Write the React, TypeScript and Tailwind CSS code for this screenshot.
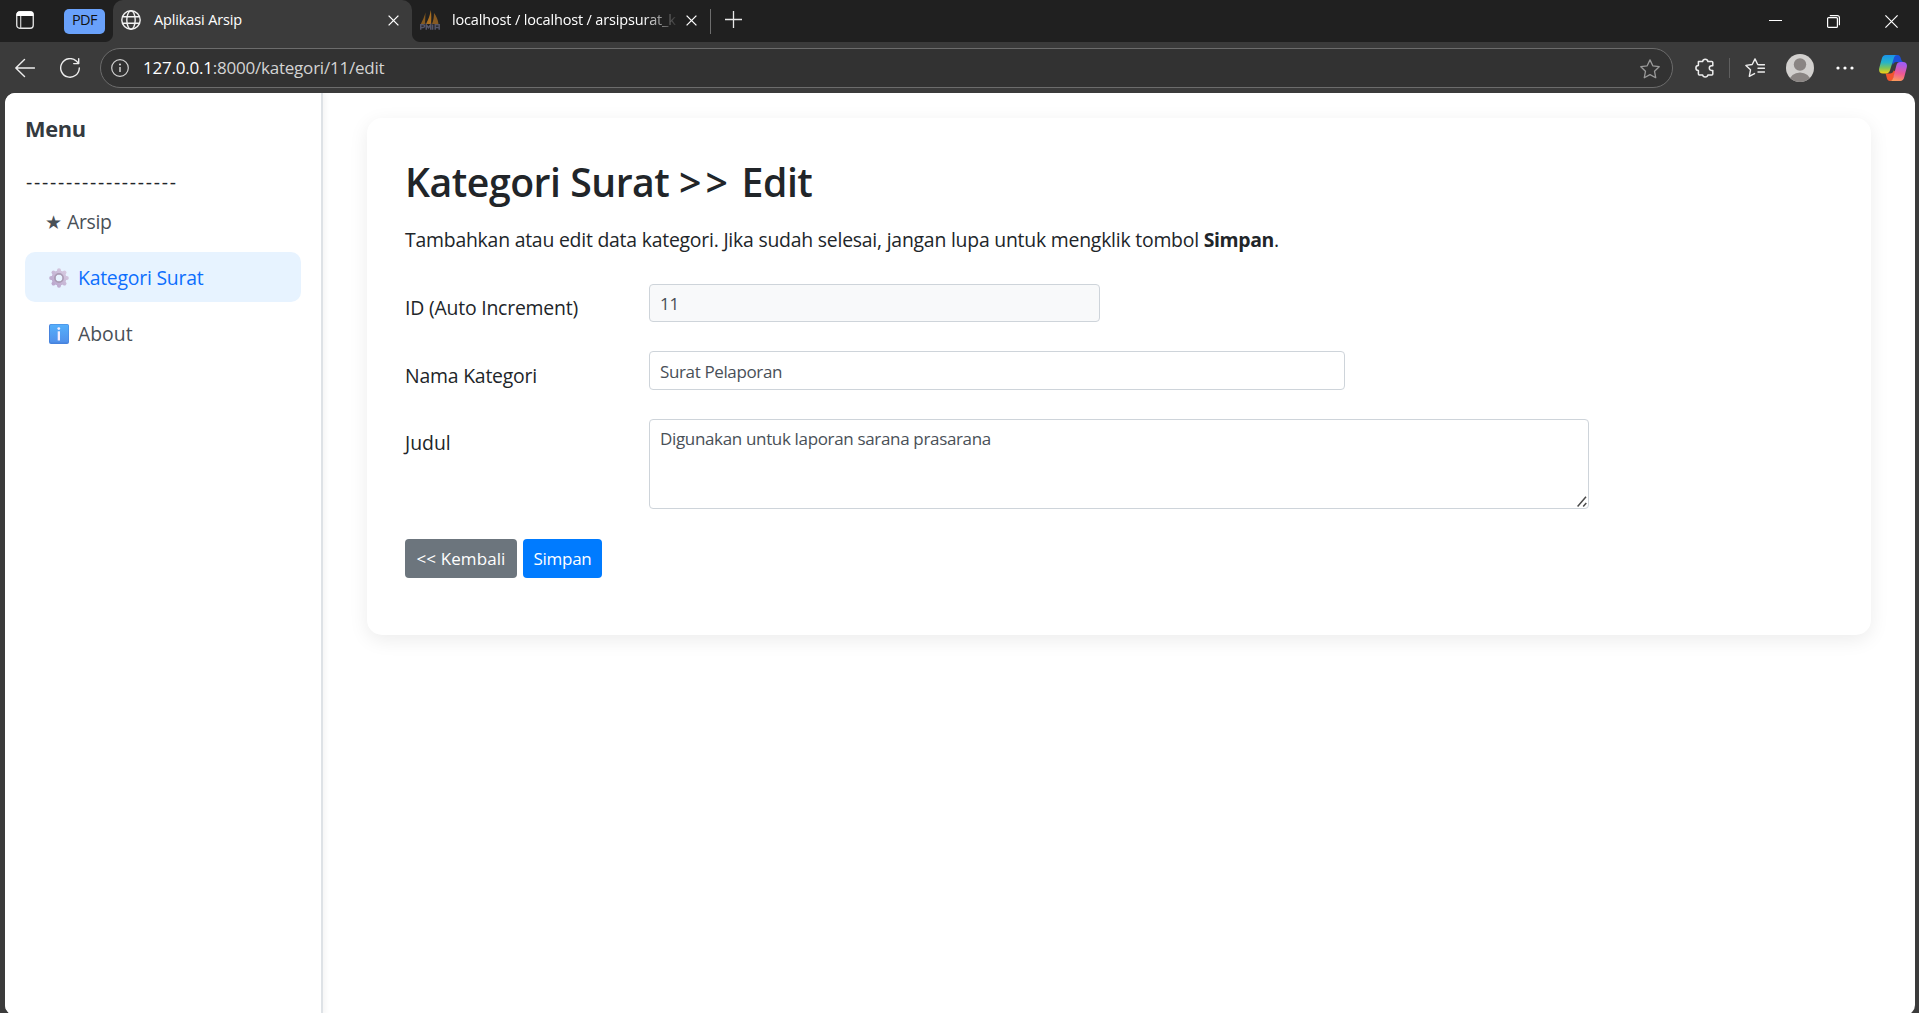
import type { ReactNode } from "react";

function TabStrip() {
  return (
    <div className="flex h-[42px] shrink-0 items-start bg-[#202020] text-[14.5px] leading-5 text-white">
      <svg className="mt-[11px] ml-4 h-[18px] w-[18px] shrink-0" viewBox="0 0 18 18" fill="none">
        <rect x=".75" y=".75" width="16.5" height="16.5" rx="3" stroke="#e8e8e8" strokeWidth="1.3" />
        <path d="M.5 5V3.5a3 3 0 0 1 3-3h11a3 3 0 0 1 3 3V5z" fill="#fff" />
        <path d="M4.7 5v12.5" stroke="#cfcfcf" strokeWidth="1.2" />
      </svg>
      <div className="mt-[9px] ml-[30px] flex h-[25px] w-[41px] shrink-0 justify-center rounded-[5px] bg-[#69a1fa] pt-px tracking-[-0.5px] text-[#111]">
        PDF
      </div>
      <div className="relative ml-2 flex h-[42px] w-[299px] shrink-0 items-start rounded-t-[10px] bg-[#3b3b3b]">
        <div className="absolute bottom-0 -left-2 h-2 w-2 bg-[radial-gradient(circle_at_0_0,#202020_7.5px,#3b3b3b_8.5px)]" />
        <div className="absolute -right-2 bottom-0 h-2 w-2 bg-[radial-gradient(circle_at_100%_0,#202020_7.5px,#3b3b3b_8.5px)]" />
        <svg className="mt-[10px] ml-2 h-5 w-5 shrink-0" viewBox="0 0 20 20" fill="none" stroke="#f2f2f2" strokeWidth="1.4">
          <circle cx="10" cy="10" r="9.2" />
          <ellipse cx="10" cy="10" rx="4.2" ry="9.2" />
          <path d="M1.5 6.7h17M1.5 13.3h17" />
        </svg>
        <span className="mt-[10px] ml-[13px] w-[234px] tracking-[-0.13px]">Aplikasi Arsip</span>
        <svg className="mt-[15px] h-[11px] w-[11px] shrink-0" viewBox="0 0 11 11" stroke="#fff" strokeWidth="1.3">
          <path d="M.6.6l9.8 9.8M10.4.6L.6 10.4" />
        </svg>
      </div>
      <svg className="mt-[10px] ml-2 h-5 w-5 shrink-0" viewBox="0 0 20 20">
        <path d="M5.500 2.500 5 14H.8C2.600 10.500 4.200 7 5.500 2.500z" fill="#84591f" />
        <path d="M10.800 0c.7 4.500.6 9.500.2 14H6C8.500 9.500 10 5 10.800 0z" fill="#ab6f20" />
        <path d="M14 3c2.500 3 4 7 4.500 11H12c1.500-4 2-7 2-11z" fill="#875a22" />
        <path d="M.7 19.700v-5h2.500a1.400 1.400 0 0 1 0 2.800H.8M6.300 19.700v-5l2.200 3 2.200-3v5M12.600 14.500v5.200M15.200 19.700v-4.900h4v4.900M15.200 17.400h4" fill="none" stroke="#565668" strokeWidth="1.5" />
      </svg>
      <span className="mt-[10px] ml-3 w-[225px] shrink-0 whitespace-nowrap tracking-[-0.16px] [mask-image:linear-gradient(to_right,#000_190px,transparent_228px)]">
        localhost / localhost / arsipsurat_k
      </span>
      <svg className="mt-[15px] ml-[9px] h-[11px] w-[11px] shrink-0" viewBox="0 0 11 11" stroke="#fff" strokeWidth="1.3">
        <path d="M.6.6l9.8 9.8M10.4.6L.6 10.4" />
      </svg>
      <div className="mt-[9px] ml-[13px] h-[25px] w-px shrink-0 bg-[#6e6e6e]" />
      <svg className="mt-[11px] ml-[14px] h-[17px] w-[17px] shrink-0" viewBox="0 0 17 17" stroke="#e8e8e8" strokeWidth="1.3">
        <path d="M8.5 0v17M0 8.5h17" />
      </svg>
      <div className="mt-5 ml-auto h-px w-[13px] bg-white" />
      <svg className="mt-[15px] ml-[45px] h-[13px] w-[13px] shrink-0" viewBox="0 0 13 13" fill="none" stroke="#fff" strokeWidth="1.2">
        <rect x=".6" y="2.6" width="9.8" height="9.8" rx="1" />
        <path d="M2.8.6h7.600a2 2 0 0 1 2 2v7.600" />
      </svg>
      <svg className="mt-[15px] mr-[21px] ml-[45px] h-[13px] w-[13px] shrink-0" viewBox="0 0 13 13" stroke="#fff" strokeWidth="1.2">
        <path d="M.4.4l12.2 12.2M12.6.4L.4 12.6" />
      </svg>
    </div>
  );
}

function Toolbar() {
  return (
    <div className="flex h-[51px] shrink-0 items-center pt-px">
      <svg className="ml-[15px] h-5 w-5 shrink-0" viewBox="0 0 20 20" fill="none" stroke="#ededed" strokeWidth="1.4" strokeLinecap="round" strokeLinejoin="round">
        <path d="M19.5 10H.8M9.5 1.5L.8 10l8.7 8.5" />
      </svg>
      <svg className="ml-[25px] h-5 w-5 shrink-0" viewBox="0 0 20 20" fill="none" stroke="#ededed" strokeWidth="1.4" strokeLinecap="round" strokeLinejoin="round">
        <path d="M19.3 10A9.3 9.3 0 1 1 16.3 3.1L18.7 5.5M18.7.7v4.900h-5" />
      </svg>
      <div className="ml-5 flex h-10 w-[1573px] shrink-0 items-center rounded-full border border-[#6c6c6c] bg-[#323232]">
        <svg className="ml-[10px] h-[18px] w-[18px]" viewBox="0 0 18 18" fill="none" stroke="#d2d2d2" strokeWidth="1.2">
          <circle cx="9" cy="9" r="8.3" />
          <path d="M9 8v5" strokeWidth="1.5" />
          <circle cx="9" cy="5.5" r=".5" />
        </svg>
        <span className="ml-[14px] text-[17px] leading-6 tracking-[-0.22px] text-[#d4d4d4]">
          <span className="text-white">127.0.0.1</span>:8000/kategori/11/edit
        </span>
        <svg className="mt-[2px] mr-[12px] ml-auto h-5 w-5" viewBox="0 0 20 20" fill="none" stroke="#999" strokeWidth="1.3" strokeLinejoin="round">
          <path d="M10 .9l2.8 5.9 6.4.9-4.7 4.5 1.2 6.5L10 15.6l-5.700 3.100 1.200-6.500L.8 7.700l6.400-.9z" />
        </svg>
      </div>
      <svg className="ml-[22px] h-5 w-5 shrink-0" viewBox="0 0 20 20" fill="none" stroke="#ededed" strokeWidth="1.5" strokeLinejoin="round">
        <path d="M3.400 3.500h4.200a2.700 2.700 0 0 1 5.300 0h3.900a1 1 0 0 1 1 1v3.300h-1.200a2.300 2.300 0 0 0 0 4.600h1.200v3.500a1 1 0 0 1-1 1h-3.900a2.700 2.700 0 0 1-5.300 0H4.400a1 1 0 0 1-1-1v-3.400a2.500 2.500 0 0 1 0-5z" />
      </svg>
      <div className="ml-[14px] h-5 w-px bg-[#5f5f5f]" />
      <svg className="ml-[15px] h-5 w-5 shrink-0" viewBox="0 0 20 20" fill="none" stroke="#ededed" strokeWidth="1.4" strokeLinejoin="round" strokeLinecap="round">
        <path d="M14.500 6.800l-1.800-.3L10 .9 7.200 6.500l-6.300.9 4.600 4.400-1.200 6.500 5.200-2.700M13 10.200h6.500M13 14h6.500M14.500 6.800h5" />
      </svg>
      <svg className="ml-[21px] h-7 w-7 shrink-0" viewBox="0 0 28 28">
        <clipPath id="avatar">
          <circle cx="14" cy="14" r="14" />
        </clipPath>
        <circle cx="14" cy="14" r="14" fill="#d2d0ce" />
        <g fill="#8a8583" clipPath="url(#avatar)">
          <circle cx="14" cy="10.5" r="6.2" />
          <ellipse cx="14" cy="27" rx="10.5" ry="8.6" />
        </g>
      </svg>
      <svg className="ml-[22px] h-1 w-[18px] shrink-0" viewBox="0 0 18 4" fill="#fff">
        <circle cx="2" cy="2" r="1.6" />
        <circle cx="9" cy="2" r="1.6" />
        <circle cx="16" cy="2" r="1.6" />
      </svg>
      <svg className="ml-[25px] h-[26px] w-7 shrink-0" viewBox="0 0 28 26">
        <defs>
          <linearGradient id="cpA" x1="0" y1="0" x2="0" y2="1">
            <stop offset="0" stopColor="#1a93ea" />
            <stop offset=".4" stopColor="#26b3c9" />
            <stop offset=".7" stopColor="#7dc45a" />
            <stop offset="1" stopColor="#f5cf12" />
          </linearGradient>
          <linearGradient id="cpB" x1=".2" y1="0" x2="0" y2="1">
            <stop offset="0" stopColor="#a45cf0" />
            <stop offset=".5" stopColor="#ee5893" />
            <stop offset="1" stopColor="#ffa552" />
          </linearGradient>
        </defs>
        <path d="M15 0h3.500c2 0 2.700 1.400 3.300 3.300.6 2.200 1.200 3.700 3.200 3.700h-7.500c-2 0-3 1-3.600 3L12 5z" fill="#1c50d8" />
        <path d="M6.500 18.500H11c2 0 3-.8 3.600-3l2 1-2.300 6.800c-.6 1.600-1.400 2.700-3.300 2.700-2 0-2.800-1.200-3.300-3.500-.4-2-1.200-4-1.200-4z" fill="#f2542d" />
        <path d="M6.800 0h11.400c-2 0-2.800 1.400-3.400 3.300l-3.800 12c-.6 2-1.600 3.200-4 3.200H4C.5 18.500-.5 16 .3 12.800L2.800 3.700C3.500 1.300 4.700 0 6.800 0z" fill="url(#cpA)" />
        <path d="M21.200 26H10.800c2 0 2.800-1.200 3.400-3.200L17.500 10c.6-2 1.600-3 4-3H24c3.500 0 4.500 2.500 3.700 5.700l-2.500 9.600c-.7 2.500-1.900 3.700-4 3.700z" fill="url(#cpB)" />
      </svg>
    </div>
  );
}

function GearIcon() {
  return (
    <svg className="h-5 w-5 shrink-0" viewBox="-10 -10 20 20">
      <defs>
        <linearGradient id="gear" gradientUnits="userSpaceOnUse" x1="8" y1="-8" x2="-8" y2="8">
          <stop offset="0" stopColor="#d9cde2" />
          <stop offset="1" stopColor="#b7a3cb" />
        </linearGradient>
      </defs>
      <g stroke="url(#gear)" strokeWidth="4" strokeLinecap="round">
        <path d="M.01-7.800L-.01-5M.01 7.800L-.01 5M-7.800.01L-5-.01M7.800.01L5-.01M-5.500-5.500L-4-4M5.500 5.500L4 4M-5.500 5.500L-4 4M5.500-5.500L4-4" />
      </g>
      <circle r="5.500" fill="none" stroke="url(#gear)" strokeWidth="4" />
      <circle r="4.200" fill="none" stroke="#a99bb3" strokeWidth="1.4" />
    </svg>
  );
}

function InfoIcon() {
  return (
    <svg className="h-5 w-5 shrink-0" viewBox="0 0 20 20">
      <defs>
        <linearGradient id="info" x1="0" y1="0" x2="0" y2="1">
          <stop offset="0" stopColor="#55b0fb" />
          <stop offset="1" stopColor="#5090ea" />
        </linearGradient>
      </defs>
      <rect width="20" height="20" rx="2" fill="#4683dd" />
      <rect x="1" y=".5" width="18.5" height="18" rx="1.5" fill="url(#info)" />
      <rect x="8.7" y="7.3" width="2.3" height="9.2" fill="#f4efff" />
      <circle cx="9.8" cy="4.6" r="1.4" fill="#f4efff" />
    </svg>
  );
}

function Sidebar() {
  return (
    <aside className="z-10 flex w-[318px] shrink-0 flex-col border-r-2 border-[#dee2e6] bg-white px-5 pt-[21px] text-[19.4px] leading-[30px] text-[#495057] shadow-[2px_0_6px_rgba(0,0,0,0.05)]">
      <h4 className="text-[21.8px] font-bold tracking-[-0.3px] text-[#343a40]">Menu</h4>
      <div className="mt-[23px] pl-px whitespace-nowrap tracking-[1.75px] text-[#212529]">-------------------</div>
      <nav className="-mt-px">
        <a className="flex h-[50px] items-center pt-[2px] pl-5 tracking-[-0.3px]">
          <span className="w-[22px] font-['DejaVu_Sans'] text-[19px]">★</span>
          Arsip
        </a>
        <a className="mt-[6px] flex h-[50px] w-[276px] items-center gap-[9px] rounded-[10px] bg-[#e7f3ff] pt-[2px] pl-6 tracking-[-0.23px] text-[#0d6efd]">
          <GearIcon />
          Kategori Surat
        </a>
        <a className="mt-[6px] flex h-[50px] items-center gap-[9px] pt-[2px] pl-6">
          <InfoIcon />
          About
        </a>
      </nav>
    </aside>
  );
}

function Row({ label, height, children }: { label: ReactNode; height: string; children: ReactNode }) {
  return (
    <div className={`flex ${height}`}>
      <div className="w-[244px] pt-[9px] leading-[30px]">{label}</div>
      {children}
    </div>
  );
}

export default function App() {
  return (
    <div className="flex h-[1013px] w-[1919px] flex-col overflow-hidden bg-[#3b3b3b] font-['Open_Sans',sans-serif]">
      <TabStrip />
      <Toolbar />
      <div className="mr-1 ml-[5px] flex h-[922px] shrink-0 overflow-hidden rounded-[10px] bg-white">
        <Sidebar />
        <main className="flex-1 pt-[25px] pl-11">
          <section className="h-[517px] w-[1504px] rounded-[15px] bg-white pt-10 pl-[38px] text-[19.4px] text-[#212529] shadow-[0_5px_19px_rgba(0,0,0,0.08)]">
            <h1 className="text-[39.2px] leading-[48px] font-semibold tracking-[-0.48px]">
              Kategori Surat <span className="tracking-[4px]">&gt;&gt;</span> Edit
            </h1>
            <p className="mt-[19px] leading-[30px] tracking-[-0.22px]">
              Tambahkan atau edit data kategori. Jika sudah selesai, jangan lupa untuk mengklik tombol{" "}
              <b className="tracking-[-0.35px]">Simpan</b>.
            </p>
            <div className="mt-[29px]">
              <Row height="h-[67px]" label={<span className="tracking-[-0.2px]">ID (Auto Increment)</span>}>
                <div className="flex h-[38px] w-[451px] items-center rounded-[4px] border border-[#ced4da] bg-[#f8f9fa] pt-px pl-[10px] text-[17px] tracking-[-0.3px] text-[#495057]">
                  11
                </div>
              </Row>
              <Row height="h-[68px]" label={<span className="relative top-px tracking-[-0.2px]">Nama Kategori</span>}>
                <div className="flex h-[39px] w-[696px] items-center rounded-[4px] border border-[#ced4da] pt-[2px] pl-[10px] text-[17px] tracking-[-0.37px] text-[#495057]">
                  Surat Pelaporan
                </div>
              </Row>
              <Row height="h-[120px]" label="Judul">
                <div className="relative h-[90px] w-[940px] rounded-[4px] border border-[#ced4da] pt-[6px] pl-[10px] text-[17px] leading-[26px] tracking-[-0.34px] text-[#495057]">
                  Digunakan untuk laporan sarana prasarana
                  <svg className="absolute right-[1px] bottom-[1px] h-[11px] w-[10px]" viewBox="0 0 10 11" stroke="#4a4a4a" strokeWidth="1.5">
                    <path d="M.6 10.4L9 .8M6.2 10.4L9.3 7" />
                  </svg>
                </div>
              </Row>
            </div>
            <div className="flex gap-[6px] text-[17px] leading-[39px] text-white">
              <button className="w-28 rounded-[4px] bg-[#6c757d] tracking-[0.1px]">&lt;&lt; Kembali</button>
              <button className="w-[79px] rounded-[4px] bg-[#007bff] tracking-[-0.3px]">Simpan</button>
            </div>
          </section>
        </main>
      </div>
    </div>
  );
}
